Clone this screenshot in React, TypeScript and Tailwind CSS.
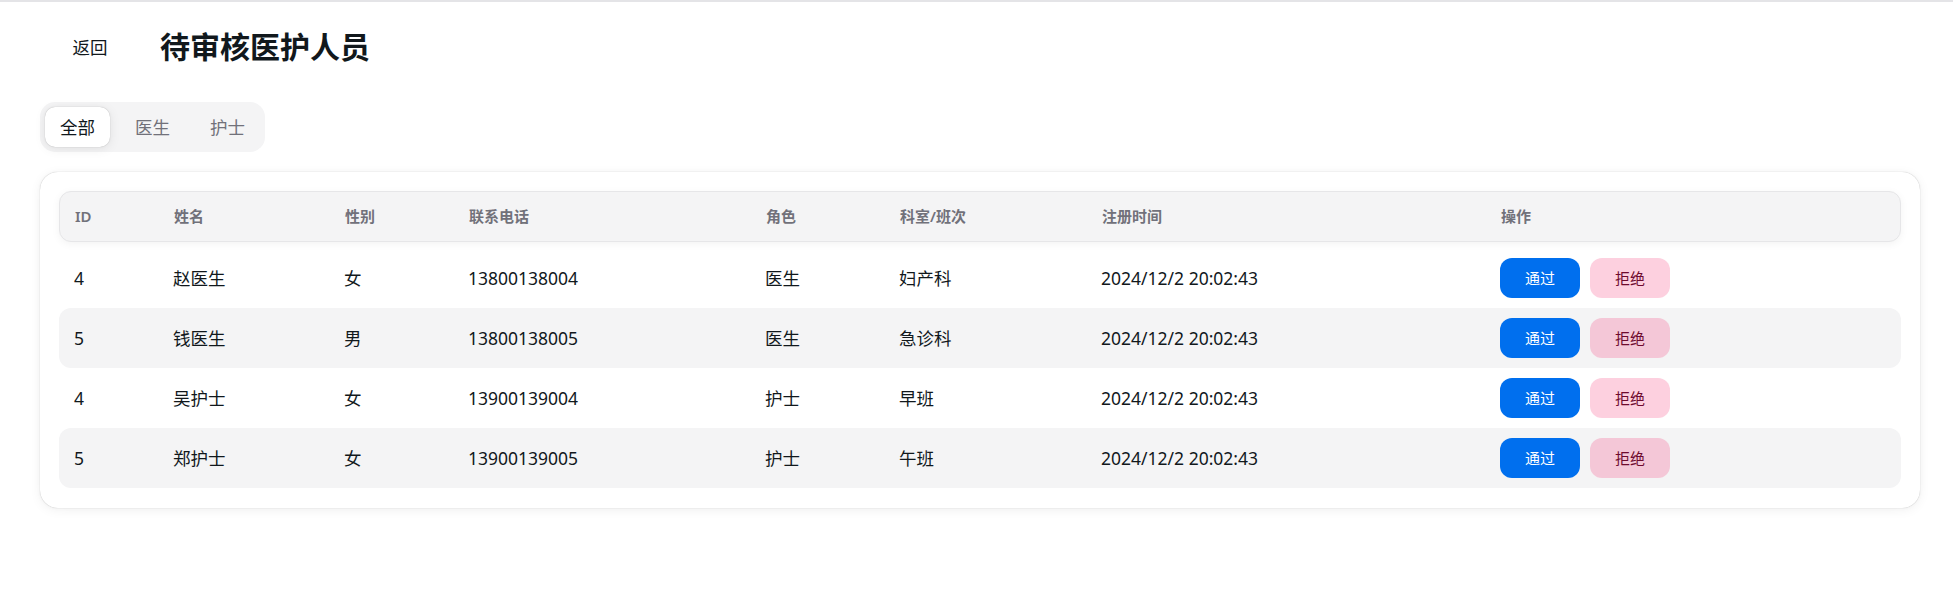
import { useState } from 'react'

type Staff = {
  id: number
  name: string
  gender: string
  phone: string
  role: string
  dept: string
  time: string
}

const pendientes: Staff[] = [
  { id: 4, name: '赵医生', gender: '女', phone: '13800138004', role: '医生', dept: '妇产科', time: '2024/12/2 20:02:43' },
  { id: 5, name: '钱医生', gender: '男', phone: '13800138005', role: '医生', dept: '急诊科', time: '2024/12/2 20:02:43' },
  { id: 4, name: '吴护士', gender: '女', phone: '13900139004', role: '护士', dept: '早班', time: '2024/12/2 20:02:43' },
  { id: 5, name: '郑护士', gender: '女', phone: '13900139005', role: '护士', dept: '午班', time: '2024/12/2 20:02:43' },
]

const columnas = ['ID', '姓名', '性别', '联系电话', '角色', '科室/班次', '注册时间', '操作']
const tabs = ['全部', '医生', '护士']

const gridCols = 'grid grid-cols-[99px_171px_124px_297px_134px_202px_399px_1fr]'

export default function App() {
  const [tab, setTab] = useState(0)

  return (
    <div className="min-h-screen bg-white font-['Noto_Sans','Noto_Sans_CJK_SC',sans-serif] text-[#11181c]">
      <div className="h-[2px] bg-[#e4e4e7]" />

      <div className="pl-10 pr-[33px] pt-5">
        <div className="flex items-center gap-5 mb-[30px]">
          <button className="h-[50px] w-[100px] rounded-[15px] text-[17.5px] hover:bg-[#f4f4f5]">
            返回
          </button>
          <h1 className="text-[30px] font-bold leading-none">待审核医护人员</h1>
        </div>

        {/* tabs */}
        <div className="inline-flex items-center gap-[10px] p-[5px] h-[50px] rounded-[15px] bg-[#f4f4f5] mb-5">
          {tabs.map((t, i) => (
            <button
              key={t}
              onClick={() => setTab(i)}
              className={
                tab === i
                  ? 'h-10 w-[65px] rounded-[10px] bg-white text-[17.5px] text-[#11181c] shadow-[0_0_6px_0_rgba(0,0,0,0.02),0_2px_12px_0_rgba(0,0,0,0.08),0_0_1px_0_rgba(0,0,0,0.3)]'
                  : 'h-10 w-[65px] rounded-[10px] text-[17.5px] text-[#71717a]'
              }
            >
              {t}
            </button>
          ))}
        </div>

        {/* tabla */}
        <div className="rounded-[18px] bg-white p-[19px] pb-5 shadow-[0_0_6px_0_rgba(0,0,0,0.02),0_2px_12px_0_rgba(0,0,0,0.06),0_0_1px_0_rgba(0,0,0,0.3)]">
          <div className={`${gridCols} h-[51px] items-center rounded-[12px] bg-[#f4f4f5] border border-[#e6e6e8] shadow-[0_2px_8px_0_rgba(0,0,0,0.05)] mb-[6px]`}>
            {columnas.map((c) => (
              <div key={c} className="px-[15px] text-[15px] font-semibold text-[#71717a]">
                {c}
              </div>
            ))}
          </div>

          {pendientes.map((p, i) => (
            <div
              key={p.phone}
              className={`${gridCols} h-[60px] items-center rounded-[12px] text-[17.5px] ${i % 2 === 1 ? 'bg-[#f4f4f5]' : ''}`}
            >
              <div className="px-[15px]">{p.id}</div>
              <div className="px-[15px]">{p.name}</div>
              <div className="px-[15px]">{p.gender}</div>
              <div className="px-[15px]">{p.phone}</div>
              <div className="px-[15px]">{p.role}</div>
              <div className="px-[15px]">{p.dept}</div>
              <div className="px-[15px]">{p.time}</div>
              <div className="px-[15px] flex gap-[10px]">
                <button className="h-10 w-20 rounded-[12px] bg-[#006fee] text-[15px] text-white">通过</button>
                <button className="h-10 w-20 rounded-[12px] bg-[#f31260]/20 text-[15px] text-[#6e0a2e]">拒绝</button>
              </div>
            </div>
          ))}
        </div>
      </div>
    </div>
  )
}
